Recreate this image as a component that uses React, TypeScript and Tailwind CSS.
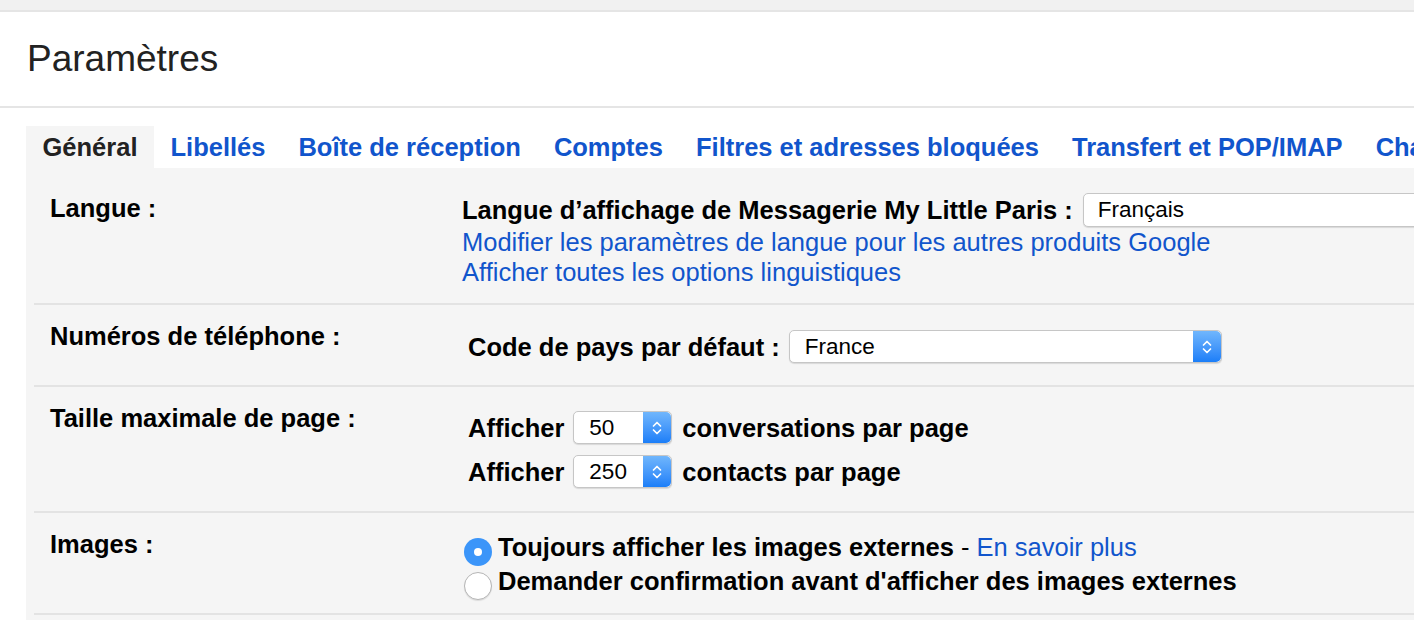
import React from 'react';

const tabs = [
  'Général',
  'Libellés',
  'Boîte de réception',
  'Comptes',
  'Filtres et adresses bloquées',
  'Transfert et POP/IMAP',
  'Chat',
];

function Stepper() {
  return (
    <div className="w-[28px] h-full shrink-0 rounded-r-[5px] bg-gradient-to-b from-[#70b6fc] to-[#1a7ef8] flex items-center justify-center">
      <svg width="12" height="20" viewBox="0 0 12 20" fill="none" stroke="white" strokeWidth="1.7" strokeLinecap="round" strokeLinejoin="round">
        <path d="M2.5 8 L6 4.5 L9.5 8" />
        <path d="M2.5 12 L6 15.5 L9.5 12" />
      </svg>
    </div>
  );
}

function Select({ value, width }: { value: string; width: string }) {
  return (
    <div
      className={`${width} h-[33px] shrink-0 flex items-stretch bg-white border border-[#c6c6c6] rounded-[5px] shadow-[0_1px_1px_rgba(0,0,0,0.12)]`}
    >
      <div className="flex-1 flex items-center pl-[15px] text-[22.5px] leading-[30px] font-normal text-black">{value}</div>
      <Stepper />
    </div>
  );
}

function Radio({ checked }: { checked?: boolean }) {
  if (checked) {
    return (
      <div className="w-[28px] h-[28px] shrink-0 rounded-full bg-[#3b95f9] flex items-center justify-center mt-[8px] ml-[2px]">
        <div className="w-[8px] h-[8px] rounded-full bg-white" />
      </div>
    );
  }
  return (
    <div className="w-[28px] h-[28px] shrink-0 rounded-full bg-white border border-[#b5b5b5] shadow-[0_1px_1px_rgba(0,0,0,0.1)] mt-[8px] ml-[2px]" />
  );
}

function Row({ label, labelPad = 'pt-[16px]', children }: { label: string; labelPad?: string; children: React.ReactNode }) {
  return (
    <div className="flex border-b-2 border-[#e3e3e3]">
      <div className={`w-[428px] shrink-0 pl-[16px] ${labelPad} text-[25.5px] leading-[30px] font-bold text-black`}>
        {label}
      </div>
      <div className="flex-1 min-w-0">{children}</div>
    </div>
  );
}

export default function App() {
  return (
    <div className="w-[1414px] h-[620px] overflow-hidden bg-white leading-[30px] font-['Liberation_Sans',Arial,sans-serif]">
      <div className="h-[12px] bg-[#f1f1f1] border-b-2 border-[#e5e5e5]" />
      <div className="h-[96px] border-b-2 border-[#e5e5e5] pl-[27px] flex items-center">
        <h1 className="text-[37px] leading-[44px] text-[#222]">Paramètres</h1>
      </div>

      <div className="pt-[18px] pl-[26px]">
        <div className="flex h-[42px] whitespace-nowrap">
          {tabs.map((t, i) => (
            <div
              key={t}
              className={`px-[16.5px] flex items-center text-[25.5px] font-bold shrink-0 ${
                i === 0 ? 'bg-[#f5f5f5] text-[#222]' : 'text-[#15c]'
              }`}
            >
              {t}
            </div>
          ))}
        </div>

        <div className="bg-[#f5f5f5] pt-[9px] pl-[8px] h-[460px] whitespace-nowrap">
          <Row label="Langue :">
            <div className="pt-[16px] pb-[16px] text-[25.5px]">
              <div className="h-[34px] flex items-center">
                <span className="font-bold text-black">Langue d’affichage de Messagerie My Little Paris :</span>
                <div className="ml-[10px] w-[420px] h-[34px] shrink-0 flex items-center bg-white border border-[#c6c6c6] rounded-[5px] shadow-[0_1px_1px_rgba(0,0,0,0.12)] pl-[14px] text-[22.5px] text-black">
                  Français
                </div>
              </div>
              <div className="leading-[30px] text-[#15c]">Modifier les paramètres de langue pour les autres produits Google</div>
              <div className="leading-[30px] text-[#15c]">Afficher toutes les options linguistiques</div>
            </div>
          </Row>

          <Row label="Numéros de téléphone :">
            <div className="pt-[25px] pb-[22px] pl-[6px] h-[33px] box-content flex items-center text-[25.5px]">
              <span className="font-bold text-black">Code de pays par défaut :</span>
              <div className="ml-[9px]">
                <Select value="France" width="w-[433px]" />
              </div>
            </div>
          </Row>

          <Row label="Taille maximale de page :">
            <div className="pt-[24px] pb-[23px] pl-[6px] flex flex-col gap-[11px] text-[25.5px] font-bold text-black">
              <div className="flex items-center h-[33px]">
                <span>Afficher</span>
                <div className="ml-[9px]">
                  <Select value="50" width="w-[99px]" />
                </div>
                <span className="ml-[10px]">conversations par page</span>
              </div>
              <div className="flex items-center h-[33px]">
                <span>Afficher</span>
                <div className="ml-[9px]">
                  <Select value="250" width="w-[99px]" />
                </div>
                <span className="ml-[10px]">contacts par page</span>
              </div>
            </div>
          </Row>

          <Row label="Images :">
            <div className="pt-[17px] pb-[15px] text-[25.5px]">
              <div className="h-[34px] flex items-start">
                <Radio checked />
                <div className="ml-[6px] leading-[34px]">
                  <span className="font-bold text-black">Toujours afficher les images externes</span>
                  <span className="text-black"> - </span>
                  <span className="text-[#15c]">En savoir plus</span>
                </div>
              </div>
              <div className="h-[34px] flex items-start">
                <Radio />
                <div className="ml-[6px] leading-[34px] font-bold text-black">
                  Demander confirmation avant d'afficher des images externes
                </div>
              </div>
            </div>
          </Row>
        </div>
      </div>
    </div>
  );
}
